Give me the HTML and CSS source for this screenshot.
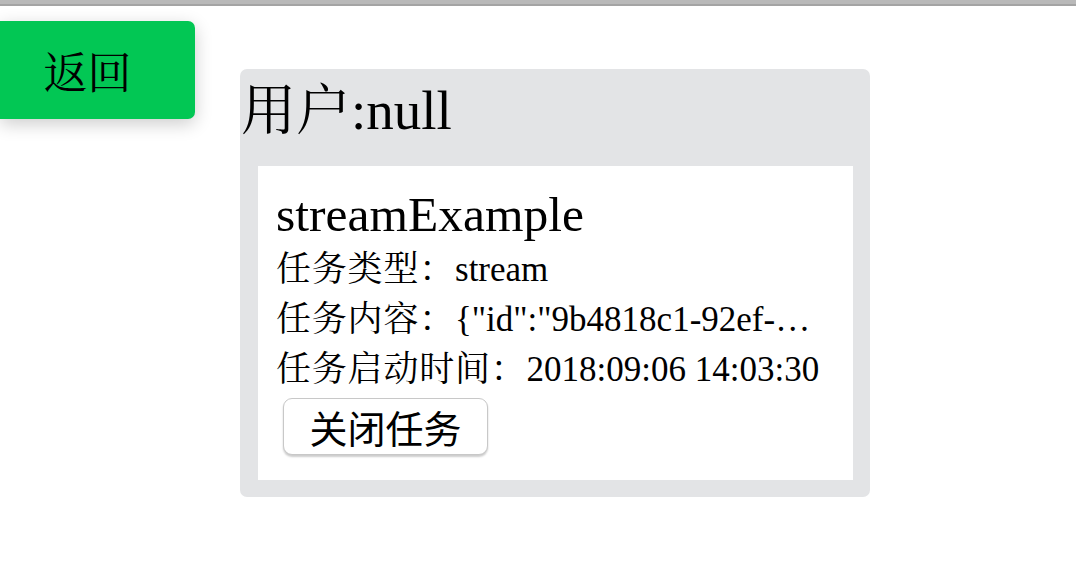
FILE: index.html
```html
<!DOCTYPE html>
<html lang="zh-CN">
<head>
<meta charset="utf-8">
<title>任务</title>
<link rel="stylesheet" href="styles.css">
</head>
<body>
<div class="topbar"></div>
<div class="page">
  <div class="back">返回</div>
  <div class="card">
    <h2 class="user">用户:null</h2>
    <div class="task">
      <div class="task-name">streamExample</div>
      <div class="row"><span class="label">任务类型：</span>stream</div>
      <div class="row"><span class="label">任务内容：</span>{"id":"9b4818c1-92ef-…</div>
      <div class="row"><span class="label">任务启动时间：</span>2018:09:06 14:03:30</div>
      <button class="close">关闭任务</button>
    </div>
  </div>
</div>
</body>
</html>
```
FILE: styles.css
```css
html, body {
  margin: 0;
  padding: 0;
  background: #ffffff;
}
body {
  font-family: "Liberation Serif", "Noto Serif CJK SC", "Noto Sans CJK SC", serif;
  color: #000;
}
.topbar {
  height: 4px;
  background: #b9b9b9;
  border-bottom: 2px solid #a4a4a4;
}
.page {
  display: flex;
  align-items: flex-start;
}
.back {
  margin-top: 15px;
  width: 175px;
  padding-right: 20px;
  height: 98px;
  background: #02c754;
  border-radius: 0 7px 7px 0;
  box-shadow: 0 5px 18px rgba(0, 0, 0, 0.2);
  display: flex;
  align-items: center;
  justify-content: center;
  font-size: 44px;
  flex: none;
}
.card {
  margin-left: 45px;
  margin-top: 63px;
  width: 630px;
  padding: 0 0 17px 0;
  background: #e3e4e6;
  border-radius: 7px;
  flex: none;
}
.user {
  margin: 0;
  padding: 12px 0 25px 1px;
  font-size: 55px;
  line-height: 60px;
  font-weight: normal;
}
.task {
  margin: 0 17px 0 18px;
  background: #fff;
  padding: 19px 18px 25px 18px;
}
.task-name {
  font-size: 49.5px;
  line-height: 60px;
}
.row {
  font-size: 35px;
  line-height: 50px;
  white-space: nowrap;
  overflow: hidden;
}
.label {
  letter-spacing: 0.8px;
}
.close {
  margin: 3px 0 0 7px;
  width: 205px;
  height: 57px;
  padding: 0;
  background: #fff;
  border: 1px solid #c8c8c8;
  border-radius: 9px;
  box-shadow: 0 2px 2px rgba(0, 0, 0, 0.2);
  font-family: "Noto Sans CJK SC", sans-serif;
  font-size: 38px;
  color: #000;
  display: block;
}
```
